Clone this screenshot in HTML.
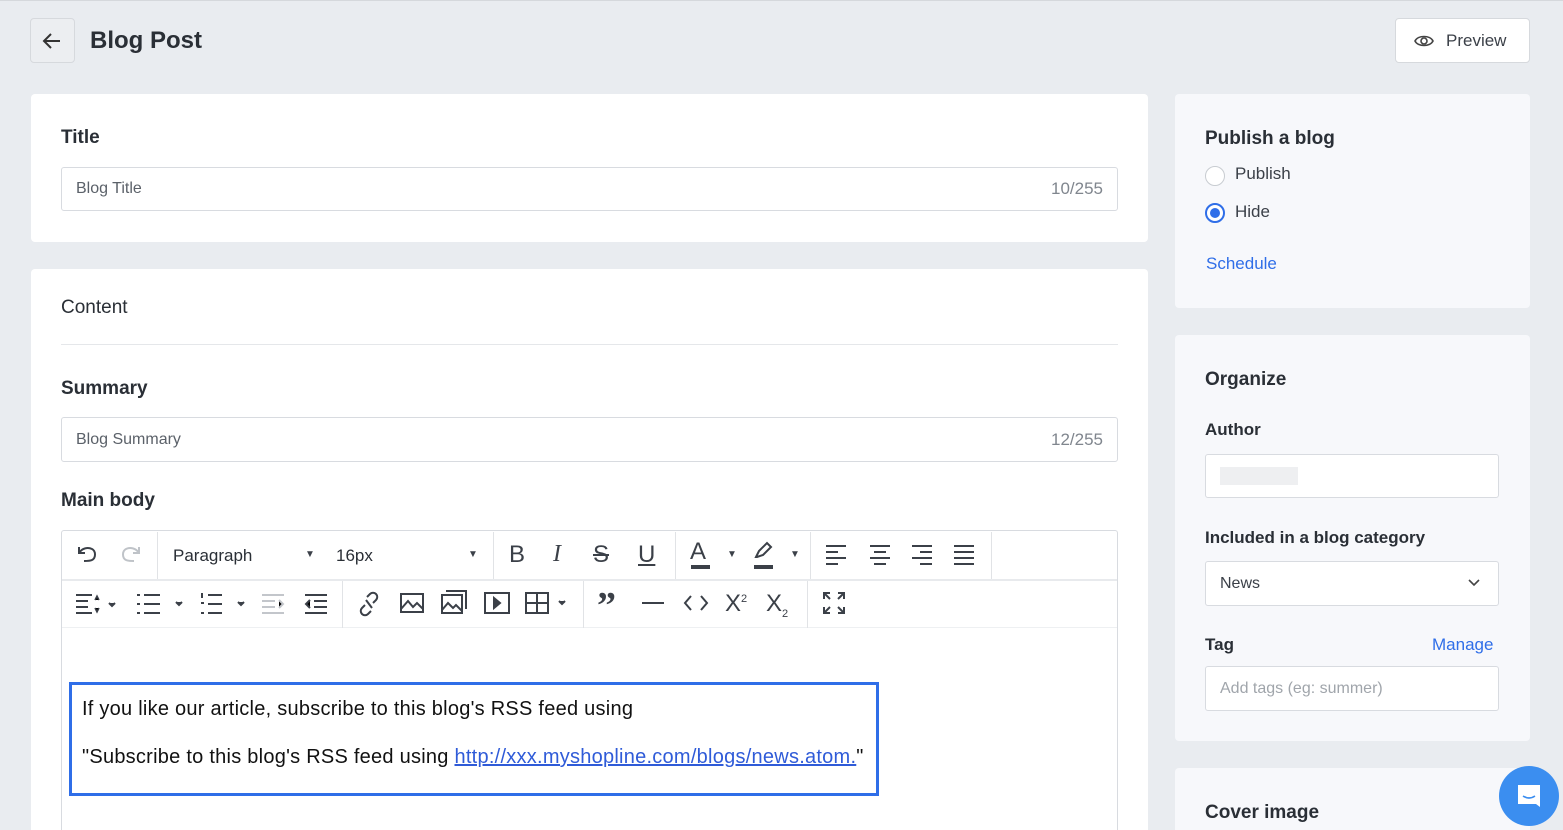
<!DOCTYPE html>
<html style="width:1563px;height:830px;overflow:hidden"><head><meta charset="utf-8"><style>
*{box-sizing:border-box;margin:0;padding:0}
body{width:1563px;height:830px;overflow:hidden;background:#e9ecf0;font-family:"Liberation Sans",sans-serif;color:#1f2329;position:relative;border-top:1px solid #d5d8dc}
.abs{position:absolute}
.card{position:absolute;background:#fff;border-radius:4px}
.rc{background:#f7f8fb}
.h{font-size:19px;font-weight:bold;color:#2a2f36}
.lbl{font-size:17px;font-weight:bold;color:#2a2f36;position:absolute}
.inp{position:absolute;border:1px solid #d8dbe0;border-radius:3px;background:#fff;font-size:16px;color:#5b6169;padding-left:14px;display:flex;align-items:center}
.cnt{position:absolute;right:14px;color:#80868e;font-size:17px}
.sep{position:absolute;width:1px;background:#e1e3e6}
.ic{position:absolute;font-size:22px;color:#3b4048;text-align:center}
svg{position:absolute}
</style></head><body>
<div class="abs" style="left:30px;top:17px;width:45px;height:45px;border:1px solid #d6d9dd;border-radius:4px;background:#eceef1"></div>
<svg style="left:40px;top:28px" width="24" height="24" viewBox="0 0 24 24"><path d="M20 12H5M11 5l-7 7 7 7" fill="none" stroke="#333" stroke-width="2"/></svg>
<div class="abs" style="left:90px;top:26px;font-size:24px;font-weight:bold;color:#2a2f36">Blog Post</div>
<div class="abs" style="left:1395px;top:17px;width:135px;height:45px;border:1px solid #d6d9dd;border-radius:4px;background:#fff;font-size:17px;color:#3b4048;padding-left:50px;line-height:43px">Preview</div>
<svg style="left:1413px;top:30px" width="22" height="20" viewBox="0 0 22 20"><path d="M2 10C5 4 17 4 20 10C17 16 5 16 2 10Z" fill="none" stroke="#444" stroke-width="1.6"/><circle cx="11" cy="10" r="3" fill="none" stroke="#444" stroke-width="1.6"/></svg>

<div class="card" style="left:31px;top:93px;width:1117px;height:148px">
<div class="h abs" style="left:30px;top:33px">Title</div>
<div class="inp" style="left:30px;top:73px;width:1057px;height:44px">Blog Title<span class="cnt">10/255</span></div>
</div>

<div class="card" style="left:31px;top:268px;width:1117px;height:562px;border-radius:4px 4px 0 0">
<div class="abs" style="left:30px;top:28px;font-size:19px;color:#2a2f36">Content</div>
<div class="abs" style="left:30px;top:75px;width:1057px;height:1px;background:#e5e7ea"></div>
<div class="h abs" style="left:30px;top:109px">Summary</div>
<div class="inp" style="left:30px;top:148px;width:1057px;height:45px">Blog Summary<span class="cnt">12/255</span></div>
<div class="h abs" style="left:30px;top:221px">Main body</div>
<div class="abs" style="left:30px;top:261px;width:1057px;height:301px;border:1px solid #d8dbe0;border-bottom:none;border-radius:3px 3px 0 0"></div>
<div class="abs" style="left:31px;top:310px;width:1055px;height:2px;background:#e8eaed"></div>
<div class="abs" style="left:31px;top:358px;width:1055px;height:1px;background:#eef0f2"></div>
</div>

<div class="sep" style="left:157px;top:531px;height:47px"></div>
<div class="sep" style="left:493px;top:531px;height:47px"></div>
<div class="sep" style="left:675px;top:531px;height:47px"></div>
<div class="sep" style="left:810px;top:531px;height:47px"></div>
<div class="sep" style="left:991px;top:531px;height:47px"></div>
<div class="sep" style="left:342px;top:580px;height:47px"></div>
<div class="sep" style="left:583px;top:580px;height:47px"></div>
<div class="sep" style="left:807px;top:580px;height:47px"></div>
<svg style="left:75px;top:542px" width="26" height="22" viewBox="0 0 26 22"><path d="M4 4v6h6M4 10C7 5 13 4 17 6c4 2 4 9 0 11-2 1-5 1-8 1" fill="none" stroke="#3b4048" stroke-width="2"/></svg>
<svg style="left:117px;top:542px" width="26" height="22" viewBox="0 0 26 22"><path d="M22 4v6h-6M22 10C19 5 13 4 9 6c-4 2-4 9 0 11 2 1 5 1 8 1" fill="none" stroke="#bfc3c8" stroke-width="2"/></svg>
<div class="abs" style="left:173px;top:545px;font-size:17px;color:#2a2f36">Paragraph</div>
<div class="abs" style="left:305px;top:548px;font-size:10px;color:#3b4048">▼</div>
<div class="abs" style="left:336px;top:545px;font-size:17px;color:#2a2f36">16px</div>
<div class="abs" style="left:468px;top:548px;font-size:10px;color:#3b4048">▼</div>
<div class="ic" style="left:509px;top:540px;font-size:24px">B</div>
<div class="ic" style="left:553px;top:540px;font-size:24px;font-style:italic;font-family:'Liberation Serif'">I</div>
<div class="ic" style="left:593px;top:540px;font-size:24px;text-decoration:line-through">S</div>
<div class="ic" style="left:638px;top:540px;font-size:24px;text-decoration:underline">U</div>
<div class="ic" style="left:690px;top:537px;font-size:24px">A</div>
<div class="abs" style="left:691px;top:564px;width:19px;height:4px;background:#3b4048"></div>
<div class="abs" style="left:727px;top:548px;font-size:10px;color:#3b4048">▼</div>
<svg style="left:752px;top:540px" width="24" height="20" viewBox="0 0 24 20"><path d="M4 16l3-6 8-8 4 4-8 8-6 2z" fill="none" stroke="#3b4048" stroke-width="2"/></svg>
<div class="abs" style="left:754px;top:564px;width:19px;height:4px;background:#3b4048"></div>
<div class="abs" style="left:790px;top:548px;font-size:10px;color:#3b4048">▼</div>
<svg style="left:824px;top:542px" width="160" height="22" viewBox="0 0 160 22" stroke="#3b4048" stroke-width="2"><path d="M2 3h20M2 9h12M2 15h20M2 21h12"/><path d="M46 3h20M50 9h12M46 15h20M50 21h12"/><path d="M88 3h20M96 9h12M88 15h20M96 21h12"/><path d="M130 3h20M130 9h20M130 15h20M130 21h20"/></svg>
<svg style="left:75px;top:591px" width="45" height="24" viewBox="0 0 45 24" stroke="#3b4048" stroke-width="2"><path d="M1 3h16M1 9h12M1 15h12M1 21h16"/><path d="M20 8l2-4 2 4M20 16l2 4 2-4" stroke-width="1.5"/><path d="M34 11l3 3 3-3" fill="#3b4048"/></svg>
<svg style="left:136px;top:591px" width="50" height="24" viewBox="0 0 50 24" stroke="#3b4048" stroke-width="2"><path d="M1 3h3M1 12h3M1 21h3M8 3h16M8 12h16M8 21h16"/><path d="M40 10l3 3 3-3" fill="#3b4048"/></svg>
<svg style="left:200px;top:591px" width="50" height="24" viewBox="0 0 50 24" stroke="#3b4048" stroke-width="2"><path d="M2 1v5M1 11h3M1 21h3M8 3h14M8 12h14M8 21h14"/><path d="M38 10l3 3 3-3" fill="#3b4048"/></svg>
<svg style="left:261px;top:591px" width="26" height="24" viewBox="0 0 26 24" stroke="#c3c6cb" stroke-width="2"><path d="M1 3h22M1 9h13M1 15h13M1 21h22M18 8l4 4-4 4"/></svg>
<svg style="left:304px;top:591px" width="26" height="24" viewBox="0 0 26 24" stroke="#3b4048" stroke-width="2"><path d="M1 3h22M10 9h13M10 15h13M1 21h22M6 8l-4 4 4 4"/></svg>
<svg style="left:357px;top:590px" width="24" height="26" viewBox="0 0 24 26" fill="none" stroke="#3b4048" stroke-width="2"><path d="M10 6l3-3a4 4 0 016 6l-3 3M14 20l-3 3a4 4 0 01-6-6l3-3M9 9l6 8"/></svg>
<svg style="left:399px;top:590px" width="26" height="24" viewBox="0 0 26 24" fill="none" stroke="#3b4048" stroke-width="2"><rect x="2" y="3" width="22" height="18"/><path d="M2 18l7-8 5 6 4-4 6 6"/></svg>
<svg style="left:440px;top:588px" width="28" height="26" viewBox="0 0 28 26" fill="none" stroke="#3b4048" stroke-width="2"><rect x="2" y="6" width="20" height="18"/><path d="M6 2h20v18M2 21l6-7 5 5 3-3 6 6"/></svg>
<svg style="left:483px;top:590px" width="28" height="24" viewBox="0 0 28 24" fill="none" stroke="#3b4048" stroke-width="2"><rect x="2" y="2" width="24" height="20"/><path d="M11 7l6 5-6 5z" fill="#3b4048"/></svg>
<svg style="left:524px;top:590px" width="46" height="24" viewBox="0 0 46 24" fill="none" stroke="#3b4048" stroke-width="2"><rect x="2" y="2" width="22" height="20"/><path d="M13 2v20M2 12h22"/><path d="M35 10l3 3 3-3" fill="#3b4048"/></svg>
<div class="ic" style="left:597px;top:583px;font-size:38px;font-weight:bold;font-family:'Liberation Serif'">”</div>
<div class="abs" style="left:642px;top:601px;width:22px;height:2px;background:#3b4048"></div>
<svg style="left:683px;top:592px" width="26" height="20" viewBox="0 0 26 20" fill="none" stroke="#3b4048" stroke-width="2"><path d="M8 3L2 10l6 7M18 3l6 7-6 7"/></svg>
<div class="ic" style="left:725px;top:589px;font-size:24px">X<sup style="font-size:11px">2</sup></div>
<div class="ic" style="left:766px;top:589px;font-size:24px">X<sub style="font-size:11px">2</sub></div>
<svg style="left:822px;top:590px" width="24" height="24" viewBox="0 0 24 24" fill="none" stroke="#3b4048" stroke-width="2"><path d="M2 8V2h6M16 2h6v6M22 16v6h-6M8 22H2v-6M2 2l6 6M22 2l-6 6M22 22l-6-6M2 22l6-6"/></svg>

<div class="abs" style="left:69px;top:681px;width:810px;height:114px;border:3px solid #2f6ee8"></div>
<div class="abs" style="left:82px;top:697px;font-size:20px;letter-spacing:0.25px;color:#111;white-space:nowrap">If you like our article, subscribe to this blog's RSS feed using</div>
<div class="abs" style="left:82px;top:745px;font-size:20px;letter-spacing:0.25px;color:#111;white-space:nowrap">"Subscribe to this blog's RSS feed using <span style="color:#2f5bd8;text-decoration:underline">http://xxx.myshopline.com/blogs/news.atom.</span>"</div>

<div class="card rc" style="left:1175px;top:93px;width:355px;height:214px">
<div class="h abs" style="left:30px;top:34px">Publish a blog</div>
<div class="abs" style="left:30px;top:72px;width:20px;height:20px;border:1px solid #c8ccd1;border-radius:50%;background:#fff"></div>
<div class="abs" style="left:60px;top:70px;font-size:17px;color:#3b4048">Publish</div>
<div class="abs" style="left:30px;top:109px;width:20px;height:20px;border:2px solid #2f6ee8;border-radius:50%;background:#fff"><div style="margin:3px;width:10px;height:10px;border-radius:50%;background:#2f6ee8"></div></div>
<div class="abs" style="left:60px;top:108px;font-size:17px;color:#3b4048">Hide</div>
<div class="abs" style="left:31px;top:160px;font-size:17px;color:#2f6ee8">Schedule</div>
</div>
<div class="card rc" style="left:1175px;top:334px;width:355px;height:406px">
<div class="h abs" style="left:30px;top:34px">Organize</div>
<div class="lbl" style="left:30px;top:85px">Author</div>
<div class="inp" style="left:30px;top:119px;width:294px;height:44px"><div style="width:78px;height:18px;background:#eeeff1"></div></div>
<div class="lbl" style="left:30px;top:193px">Included in a blog category</div>
<div class="inp" style="left:30px;top:226px;width:294px;height:45px;color:#3b4048">News</div>
<svg style="left:292px;top:243px" width="14" height="10" viewBox="0 0 14 10"><path d="M2 2l5 5 5-5" fill="none" stroke="#444" stroke-width="1.6"/></svg>
<div class="lbl" style="left:30px;top:300px">Tag</div>
<div class="abs" style="left:257px;top:300px;font-size:17px;color:#2f6ee8">Manage</div>
<div class="inp" style="left:30px;top:331px;width:294px;height:45px;color:#a0a5ab">Add tags (eg: summer)</div>
</div>
<div class="card rc" style="left:1175px;top:767px;width:355px;height:63px;border-radius:4px 4px 0 0">
<div class="h abs" style="left:30px;top:34px">Cover image</div>
</div>
<div class="abs" style="left:1499px;top:765px;width:60px;height:60px;border-radius:50%;background:#3b8ef0"></div>
<svg style="left:1514px;top:780px" width="30" height="30" viewBox="0 0 30 30"><path d="M4 4h22v22l-4-3H4z" fill="#fff"/><path d="M9 15q6 4 12 0" fill="none" stroke="#3b8ef0" stroke-width="1.6"/></svg>
</body></html>
